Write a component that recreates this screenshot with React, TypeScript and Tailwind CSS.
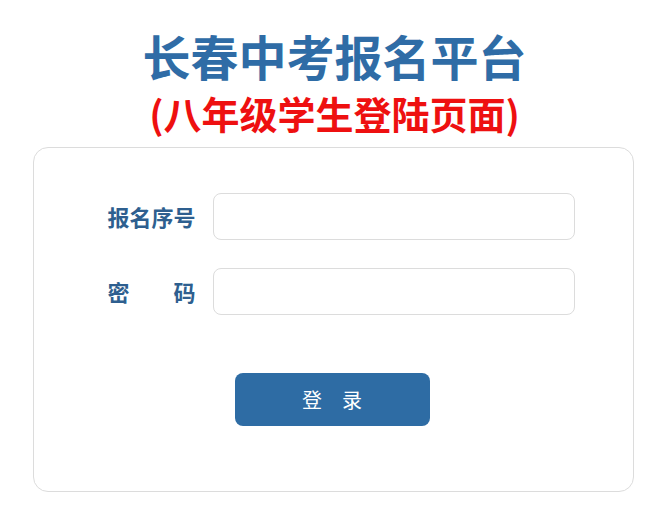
export default function App() {
  const font = { fontFamily: '"Noto Sans CJK SC", "Noto Sans", sans-serif' };
  return (
    <div className="w-[669px] h-[524px] bg-white flex flex-col items-center" style={font}>
      <h1 className="mt-[30px] text-[48px] leading-[50px] font-bold text-[#2f6ca6]">
        长春中考报名平台
      </h1>
      <h2 className="mt-[11px] text-[38px] leading-[44px] font-bold text-[#ee1010]">
        (八年级学生登陆页面)
      </h2>
      <div className="mt-[12px] mr-[3px] w-[601px] h-[345px] border border-[#dcdcdc] rounded-[15px] flex flex-col pl-[74px] pt-[45px]">
        <div className="flex items-center gap-4">
          <label className="w-[89px] text-[22px] font-bold text-[#2e5f8f] whitespace-pre">报名序号</label>
          <input className="w-[362px] h-[47px] border border-[#dcdcdc] rounded-[8px] outline-none px-3" />
        </div>
        <div className="flex items-center gap-4 mt-[28px]">
          <label className="w-[89px] text-[22px] font-bold text-[#2e5f8f] whitespace-pre">密　　码</label>
          <input type="password" className="w-[362px] h-[47px] border border-[#dcdcdc] rounded-[8px] outline-none px-3" />
        </div>
        <button className="mt-[58px] ml-[127px] w-[195px] h-[53px] bg-[#2e6ca4] rounded-[8px] text-white text-[20px] whitespace-pre">
          登　录
        </button>
      </div>
    </div>
  );
}
